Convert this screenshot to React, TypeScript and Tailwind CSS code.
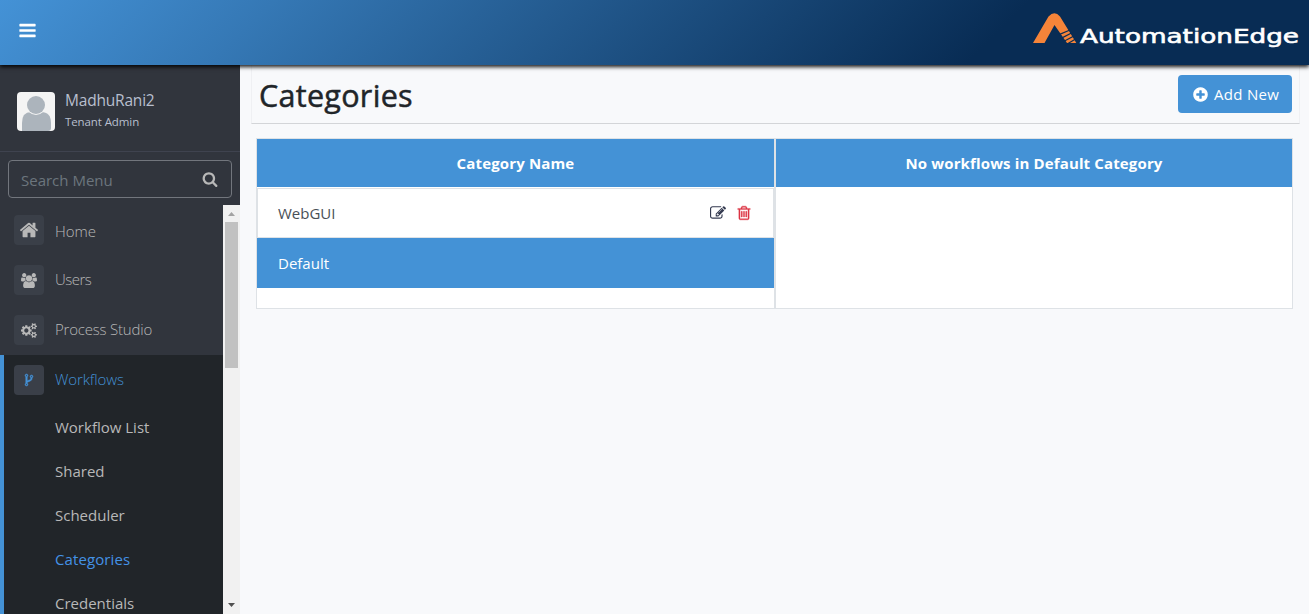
import React from "react";

type IconProps = { d: string; vb?: string; className?: string };

const Icon = ({ d, vb = "0 0 1792 1792", className = "" }: IconProps) => (
  <svg viewBox={vb} fill="currentColor" className={`block shrink-0 ${className}`} aria-hidden="true">
    <path d={d} />
  </svg>
);

const ICONS = {
  bars: "M1664 1344v128q0 26-19 45t-45 19h-1408q-26 0-45-19t-19-45v-128q0-26 19-45t45-19h1408q26 0 45 19t19 45zm0-512v128q0 26-19 45t-45 19h-1408q-26 0-45-19t-19-45v-128q0-26 19-45t45-19h1408q26 0 45 19t19 45zm0-512v128q0 26-19 45t-45 19h-1408q-26 0-45-19t-19-45v-128q0-26 19-45t45-19h1408q26 0 45 19t19 45z",
  search: "M1216 832q0-185-131.5-316.5t-316.5-131.5-316.5 131.5-131.5 316.5 131.5 316.5 316.5 131.5 316.5-131.5 131.5-316.5zm512 832q0 52-38 90t-90 38q-54 0-90-38l-343-342q-179 124-399 124-143 0-273.5-55.5t-225-150-150-225-55.5-273.5 55.5-273.5 150-225 225-150 273.5-55.5 273.5 55.5 225 150 150 225 55.5 273.5q0 220-124 399l343 343q37 37 37 90z",
  home: "M1472 992v480q0 26-19 45t-45 19h-384v-384h-256v384h-384q-26 0-45-19t-19-45v-480q0-1 .5-3t.5-3l575-474 575 474q1 2 1 6zm223-69l-62 74q-8 9-21 11h-3q-13 0-21-7l-692-577-692 577q-12 8-24 7-13-2-21-11l-62-74q-8-10-7-23.5t11-21.5l719-599q32-26 76-26t76 26l244 204v-195q0-14 9-23t23-9h192q14 0 23 9t9 23v408l219 182q10 8 11 21.5t-7 23.5z",
  users: "M593 896q-162 5-265 128h-134q-82 0-138-40.5t-56-118.5q0-353 124-353 6 0 43.5 21t97.5 42.5 119 21.5q67 0 133-23-5 37-5 66 0 139 81 256zm1071 637q0 120-73 189.5t-194 69.5h-874q-121 0-194-69.5t-73-189.5q0-53 3.5-103.5t14-109 26.5-108.5 43-97.5 62-81 85.5-53.5 111.5-20q10 0 43 21.5t73 48 107 48 135 21.5 135-21.5 107-48 73-48 43-21.5q61 0 111.5 20t85.5 53.5 62 81 43 97.5 26.5 108.5 14 109 3.5 103.5zm-1024-1277q0 106-75 181t-181 75-181-75-75-181 75-181 181-75 181 75 75 181zm704 384q0 159-112.5 271.5t-271.5 112.5-271.5-112.5-112.5-271.5 112.5-271.5 271.5-112.5 271.5 112.5 112.5 271.5zm576 225q0 78-56 118.5t-138 40.5h-134q-103-123-265-128 81-117 81-256 0-29-5-66 66 23 133 23 59 0 119-21.5t97.5-42.5 43.5-21q124 0 124 353zm-128-609q0 106-75 181t-181 75-181-75-75-181 75-181 181-75 181 75 75 181z",
  cogs: "M896 896q0-106-75-181t-181-75-181 75-75 181 75 181 181 75 181-75 75-181zm768 512q0-52-38-90t-90-38-90 38-38 90q0 53 37.5 90.5t90.5 37.5 90.5-37.5 37.5-90.5zm0-1024q0-52-38-90t-90-38-90 38-38 90q0 53 37.5 90.5t90.5 37.5 90.5-37.5 37.5-90.5zm-384 421v185q0 10-7 19.5t-16 10.5l-155 24q-11 35-32 76 34 48 90 115 7 11 7 20 0 12-7 19-23 30-82.5 89.5t-78.5 59.5q-11 0-21-7l-115-90q-37 19-77 31-11 108-23 155-7 24-30 24h-186q-11 0-20-7.5t-10-17.5l-23-153q-34-10-75-31l-118 89q-7 7-20 7-11 0-21-8-144-133-144-160 0-9 7-19 10-14 41-53t47-61q-23-44-35-82l-152-24q-10-1-17-9.5t-7-19.5v-185q0-10 7-19.5t16-10.5l155-24q11-35 32-76-34-48-90-115-7-11-7-20 0-12 7-20 22-30 82-89t79-59q11 0 21 7l115 90q34-18 77-32 11-108 23-154 7-24 30-24h186q11 0 20 7.5t10 17.5l23 153q34 10 75 31l118-89q8-7 20-7 11 0 21 8 144 133 144 160 0 8-7 19-12 16-42 54t-45 60q23 48 34 82l152 23q10 2 17 10.5t7 19.5zm640 533v140q0 16-149 31-12 27-30 52 51 113 51 138 0 4-4 7-122 71-124 71-8 0-46-47t-52-68q-20 2-30 2t-30-2q-14 21-52 68t-46 47q-2 0-124-71-4-3-4-7 0-25 51-138-18-25-30-52-149-15-149-31v-140q0-16 149-31 13-29 30-52-51-113-51-138 0-4 4-7 4-2 35-20t59-34 30-16q8 0 46 46.5t52 67.5q20-2 30-2t30 2q51-71 92-112l6-2q4 0 124 70 4 3 4 7 0 25-51 138 17 23 30 52 149 15 149 31zm0-1024v140q0 16-149 31-12 27-30 52 51 113 51 138 0 4-4 7-122 71-124 71-8 0-46-47t-52-68q-20 2-30 2t-30-2q-14 21-52 68t-46 47q-2 0-124-71-4-3-4-7 0-25 51-138-18-25-30-52-149-15-149-31v-140q0-16 149-31 13-29 30-52-51-113-51-138 0-4 4-7 4-2 35-20t59-34 30-16q8 0 46 46.5t52 67.5q20-2 30-2t30 2q51-71 92-112l6-2q4 0 124 70 4 3 4 7 0 25-51 138 17 23 30 52 149 15 149 31z",
  fork: "M672 1472q0-40-28-68t-68-28-68 28-28 68 28 68 68 28 68-28 28-68zm0-1152q0-40-28-68t-68-28-68 28-28 68 28 68 68 28 68-28 28-68zm640 128q0-40-28-68t-68-28-68 28-28 68 28 68 68 28 68-28 28-68zm96 0q0 52-26 96.5t-70 69.5q-2 287-226 414-67 38-203 81-128 40-169.5 71t-41.5 100v26q44 25 70 69.5t26 96.5q0 80-56 136t-136 56-136-56-56-136q0-52 26-96.5t70-69.5v-820q-44-25-70-69.5t-26-96.5q0-80 56-136t136-56 136 56 56 136q0 52-26 96.5t-70 69.5v497q54-26 154-57 55-17 87.5-29.5t70.5-31 59-39.5 40.5-51 28-69.5 8.5-91.5q-44-25-70-69.5t-26-96.5q0-80 56-136t136-56 136 56 56 136z",
  edit: "M888 1184l116-116-152-152-116 116v56h96v96h56zm440-720q-16-16-33 1l-350 350q-17 17-1 33t33-1l350-350q17-17 1-33zm80 594v190q0 119-84.5 203.5t-203.5 84.5h-832q-119 0-203.5-84.5t-84.5-203.5v-832q0-119 84.5-203.5t203.5-84.5h832q63 0 117 25 15 7 18 23 3 17-9 29l-49 49q-14 14-32 8-23-6-45-6h-832q-66 0-113 47t-47 113v832q0 66 47 113t113 47h832q66 0 113-47t47-113v-126q0-13 9-22l64-64q15-15 35-7t20 29zm-96-738l288 288-672 672h-288v-288zm444 132l-92 92-288-288 92-92q28-28 68-28t68 28l152 152q28 28 28 68t-28 68z",
  trash: "M704 736v576q0 14-9 23t-23 9h-64q-14 0-23-9t-9-23v-576q0-14 9-23t23-9h64q14 0 23 9t9 23zm256 0v576q0 14-9 23t-23 9h-64q-14 0-23-9t-9-23v-576q0-14 9-23t23-9h64q14 0 23 9t9 23zm256 0v576q0 14-9 23t-23 9h-64q-14 0-23-9t-9-23v-576q0-14 9-23t23-9h64q14 0 23 9t9 23zm128 724v-948h-896v948q0 22 7 40.5t14.5 27 10.5 8.5h832q3 0 10.5-8.5t14.5-27 7-40.5zm-672-1076h448l-48-117q-7-9-17-11h-317q-10 2-17 11zm928 32v64q0 14-9 23t-23 9h-96v948q0 83-47 143.5t-113 60.5h-832q-66 0-113-58.5t-47-141.5v-952h-96q-14 0-23-9t-9-23v-64q0-14 9-23t23-9h309l70-167q15-37 54-63t79-26h320q40 0 79 26t54 63l70 167h309q14 0 23 9t9 23z",
  plus: "M1344 960v-128q0-26-19-45t-45-19h-256v-256q0-26-19-45t-45-19h-128q-26 0-45 19t-19 45v256h-256q-26 0-45 19t-19 45v128q0 26 19 45t45 19h256v256q0 26 19 45t45 19h128q26 0 45-19t19-45v-256h256q26 0 45-19t19-45zm320-64q0 209-103 385.5t-279.5 279.5-385.5 103-385.5-103-279.5-279.5-103-385.5 103-385.5 279.5-279.5 385.5-103 385.5 103 279.5 279.5 103 385.5z",
};

const Logo = () => (
  <svg viewBox="0 0 269 40" className="block h-[40px] w-[269px]" role="img">
    <path fill="#f58439" d="M0 33L15.500 6.500Q21.500 0 27 6.500L43.300 33H34L21.500 15L11.500 33Z" />
    <path
      stroke="#082c54"
      strokeWidth="1.200"
      d="M26 24.600L37 20M28 28.400L39 22.800M30 31.800L41 26M32.500 35L43 28.800"
    />
    <text
      x="47"
      y="33.200"
      fill="#fff"
      stroke="#fff"
      strokeWidth="0.6"
      fontFamily="DejaVu Sans"
      fontSize="19.500"
      textLength="219"
      lengthAdjust="spacingAndGlyphs"
    >
      AutomationEdge
    </text>
  </svg>
);

const Avatar = () => (
  <svg viewBox="0 0 38 39" className="block h-[39px] w-[38px] rounded">
    <rect width="38" height="39" fill="#f4f4f4" />
    <path d="M5 39V31Q5 20 14 20H24Q34 20 34 31V36Q34 39 31 39Z" fill="#acb4bc" />
    <circle cx="19" cy="13" r="10" fill="#f4f4f4" />
    <circle cx="19" cy="13" r="9" fill="#acb4bc" />
  </svg>
);

type MenuItem = { label: string; icon: string; vb?: string; size: string; text: string };

const MENU: MenuItem[] = [
  { label: "Home", icon: ICONS.home, size: "h-[20px] w-[20px]", text: "pt-[2px]" },
  { label: "Users", icon: ICONS.users, vb: "0 0 1920 1792", size: "h-[15px] w-[16px]", text: "pb-[2px] tracking-[-0.5px]" },
  { label: "Process Studio", icon: ICONS.cogs, vb: "0 0 1920 1792", size: "h-[15px] w-[16px]", text: "pb-[2px] tracking-[-0.2px]" },
];

const SUBMENU = ["Workflow List", "Shared", "Scheduler", "Categories", "Credentials"];

export default function App() {
  return (
    <div className="flex h-[614px] w-[1309px] flex-col overflow-hidden bg-[#f8f9fb] font-['Open_Sans','Noto_Sans',sans-serif] text-[15px] leading-6">
      <header className="relative z-10 flex h-[65px] shrink-0 items-center justify-between bg-[linear-gradient(135deg,#4492d6_0%,#3578b5_20%,#082c54_75%,#082c54_100%)] pr-[7px] pl-[18px] shadow-[0_2px_4px_rgba(0,0,0,0.9)]">
        <Icon d={ICONS.bars} className="mt-[-5px] h-[19px] w-[19px] text-white" />
        <div className="mt-[-5px]">
          <Logo />
        </div>
      </header>

      <div className="flex min-h-0 flex-1">
        <aside className="flex w-[240px] shrink-0 flex-col bg-[#31353d]">
          <div className="flex h-[87px] shrink-0 items-center border-b border-[#3f434f] pt-[6px] pl-[17px]">
            <Avatar />
            <div className="ml-[10px] text-[#b8bfce]">
              <div className="text-[15.500px] leading-[21px] tracking-[-0.2px]">MadhuRani2</div>
              <div className="text-[11.500px] leading-[21px] tracking-[-0.1px]">Tenant Admin</div>
            </div>
          </div>
          <div className="mx-2 mt-2 flex h-[38px] shrink-0 items-center justify-between rounded border border-[#72767d] pr-[13px] pl-3">
            <span className="mt-px text-[#6c757d]">Search Menu</span>
            <Icon d={ICONS.search} className="h-[16px] w-[16px] text-[#b8b8b8]" />
          </div>

          <div className="mt-[7px] flex min-h-0 flex-1">
            <nav className="flex w-[223px] flex-col overflow-hidden font-light text-[#b8b8b8]">
              {MENU.map((m) => (
                <div key={m.label} className="flex h-[50px] shrink-0 items-center pl-[14px]">
                  <span className="flex h-[30px] w-[30px] items-center justify-center rounded bg-[#3a3f48]">
                    <Icon d={m.icon} vb={m.vb} className={m.size} />
                  </span>
                  <span className={`ml-[11px] ${m.text}`}>{m.label}</span>
                </div>
              ))}
              <div className="flex flex-1 flex-col border-l-4 border-[#4492d6] bg-[#212529]">
                <div className="flex h-[50px] shrink-0 items-center pl-[10px] text-[#4492d6]">
                  <span className="flex h-[30px] w-[30px] items-center justify-center rounded bg-[#3a3f48]">
                    <Icon d={ICONS.fork} className="h-[14px] w-[14px] stroke-current stroke-[60px]" />
                  </span>
                  <span className="ml-[11px] pb-[2px] tracking-[-0.1px]">Workflows</span>
                </div>
                {SUBMENU.map((s) => (
                  <div
                    key={s}
                    className={`flex h-[44px] shrink-0 items-center pl-[51px] font-normal ${s === "Categories" ? "tracking-[0.1px] text-[#4492e6]" : ""}`}
                  >
                    {s}
                  </div>
                ))}
              </div>
            </nav>
            <div className="flex w-[17px] flex-col items-center bg-[#f1f1f1]">
              <svg viewBox="0 0 17 17" className="block h-[17px] w-[17px] shrink-0">
                <path d="M5 11L8.500 7L12 11Z" fill="#a3a3a3" />
              </svg>
              <div className="h-[146px] w-[13px] bg-[#c1c1c1]" />
              <div className="flex-1" />
              <svg viewBox="0 0 17 17" className="block h-[17px] w-[17px] shrink-0">
                <path d="M5 6L8.500 10L12 6Z" fill="#505050" />
              </svg>
            </div>
          </div>
        </aside>

        <main className="flex flex-1 flex-col">
          <div className="mr-[9px] ml-[11px] flex h-[59px] shrink-0 items-center justify-between border-x border-b border-x-[#eff0f3] border-b-[#d3d5d8] pr-[7px] pl-[7px]">
            <h1 className="mt-[2px] text-[30.500px] leading-9 font-medium tracking-[0.3px] text-[#212529] [-webkit-text-stroke:0.5px_#212529]">
              Categories
            </h1>
            <button className="flex h-[38px] w-[114px] items-center rounded bg-[#4492d6] pl-[14px] text-white">
              <Icon d={ICONS.plus} className="h-[17px] w-[17px]" />
              <span className="ml-[5px] tracking-[0.3px]">Add New</span>
            </button>
          </div>

          <div className="mt-[14px] mr-4 ml-4 flex h-[171px] shrink-0">
            <section className="flex w-[519px] flex-col border border-[#dee2e6] bg-white">
              <div className="flex h-[48px] shrink-0 items-center justify-center bg-[#4492d6] font-bold tracking-[0.15px] text-white">
                Category Name
              </div>
              <div className="mt-px flex h-[50px] shrink-0 items-center border border-[#dee2e6] pr-[21px] pl-5 text-[#495057]">
                <span className="flex-1">WebGUI</span>
                <Icon d={ICONS.edit} className="h-[16px] w-[16px] text-[#343a50]" />
                <Icon d={ICONS.trash} className="ml-[10px] h-[16px] w-[16px] stroke-current stroke-[40px] text-[#dc3545]" />
              </div>
              <div className="flex h-[50px] shrink-0 items-center bg-[#4492d6] pl-[21px] text-white">Default</div>
            </section>
            <section className="flex flex-1 flex-col border border-[#dee2e6] bg-white">
              <div className="flex h-[48px] shrink-0 items-center justify-center bg-[#4492d6] font-bold tracking-[0.14px] text-white">
                No workflows in Default Category
              </div>
            </section>
          </div>
        </main>
      </div>
    </div>
  );
}
